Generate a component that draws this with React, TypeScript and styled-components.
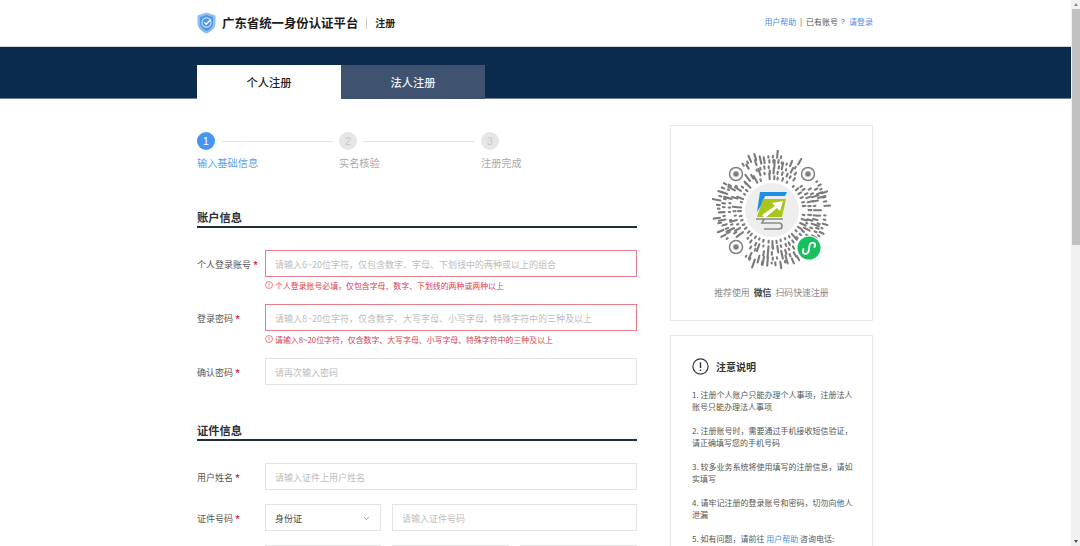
import React from 'react'
import styled, { createGlobalStyle } from 'styled-components'
import { ChevronDown } from 'lucide-react'

const GlobalStyle = createGlobalStyle`
  html, body {
    margin: 0;
    height: 546px;
    overflow: hidden;
    background: #fff;
    font-family: "Noto Sans CJK SC", "Liberation Sans", sans-serif;
  }
  * { box-sizing: border-box; }
`

const Page = styled.div`
  display: flex;
  width: 1080px;
  height: 546px;
  overflow: hidden;
`
const Main = styled.div`
  flex: 1;
  min-width: 0;
  overflow: hidden;
`
const Scrollbar = styled.aside`
  width: 9px;
  display: flex;
  flex-direction: column;
  align-items: center;
  background: #f1f1f1;
`
const ScrollArrow = styled.i<{ $down?: boolean }>`
  display: block;
  width: 0;
  height: 0;
  margin: ${(p) => (p.$down ? 'auto 0 3px' : '3px 0 2px')};
  border-left: 2.5px solid transparent;
  border-right: 2.5px solid transparent;
  border-bottom: ${(p) => (p.$down ? '0' : '3px solid #8a8a8a')};
  border-top: ${(p) => (p.$down ? '3px solid #505050' : '0')};
`
const ScrollThumb = styled.div`
  width: 8px;
  height: 236px;
  margin-top: 1px;
  background: #c1c1c1;
`

const Header = styled.header`
  height: 47px;
  padding: 0 198px 0 197px;
  display: flex;
  align-items: center;
  border-bottom: 1px solid #d4d4d4;
`
const BrandName = styled.div`
  margin: 0 0 1px 6px;
  font-size: 12.4px;
  font-weight: 700;
  color: #1b1b1b;
  white-space: nowrap;
`
const BrandDivider = styled.span`
  width: 1px;
  height: 11px;
  margin: 0 8px;
  background: #cfcfcf;
`
const BrandSub = styled.div`
  margin-bottom: 1px;
  font-size: 10px;
  font-weight: 700;
  color: #222;
`
const HeaderLinks = styled.nav`
  margin: 0 0 3px auto;
  display: flex;
  align-items: center;
  font-size: 8px;
  color: #555;
  white-space: nowrap;
`
const TextLink = styled.a`
  color: #4a90e8;
`
const LinkDivider = styled.span`
  margin: 0 4px 0 3.5px;
  color: #555;
`
const AskMark = styled.span`
  margin: 0 4px 0 2.5px;
  font-family: "Liberation Sans", sans-serif;
`

const Band = styled.div`
  height: 52px;
  padding-left: 197px;
  display: flex;
  align-items: flex-end;
  background: #0a2a4e;
  border-bottom: 1px solid #6f8197;
`
const Tab = styled.div<{ $active?: boolean }>`
  width: 144px;
  height: 34px;
  margin-bottom: -1px;
  display: flex;
  align-items: center;
  justify-content: center;
  font-size: 11.25px;
  font-weight: 500;
  color: ${(p) => (p.$active ? '#222' : '#f0f2f5')};
  background: ${(p) => (p.$active ? '#fff' : '#3f5270')};
`

const Content = styled.div`
  width: 676px;
  margin-left: 197px;
  padding-top: 26px;
  display: flex;
  justify-content: space-between;
`
const FormColumn = styled.div`
  width: 440px;
  padding-top: 7px;
`
const Steps = styled.div`
  display: grid;
  grid-template-columns: 142px 142px 60px;
`
const StepTop = styled.div`
  display: flex;
  align-items: center;
  height: 18px;
`
const StepDot = styled.span<{ $active?: boolean }>`
  flex: none;
  width: 18px;
  height: 18px;
  border-radius: 50%;
  display: flex;
  align-items: center;
  justify-content: center;
  font-family: "Liberation Sans", sans-serif;
  font-size: 10.5px;
  color: ${(p) => (p.$active ? '#fff' : '#c9c9c9')};
  background: ${(p) => (p.$active ? '#4596f2' : '#e6e6e6')};
`
const StepLine = styled.span`
  width: 112px;
  height: 1px;
  margin-left: 6px;
  background: #e2e2e2;
`
const StepLabel = styled.div<{ $active?: boolean }>`
  margin-top: 6px;
  font-size: 10.2px;
  line-height: 14px;
  white-space: nowrap;
  color: ${(p) => (p.$active ? '#5a9ff0' : '#a9a9a9')};
`

const SectionTitle = styled.h2<{ $gap: number }>`
  margin: ${(p) => p.$gap}px 0 22px;
  height: 20px;
  font-size: 11.25px;
  line-height: 18px;
  font-weight: 700;
  color: #2a2f36;
  border-bottom: 2px solid #1f2d3d;
`
const Field = styled.div`
  display: grid;
  grid-template-columns: 68px 1fr;
  margin-bottom: 14px;
`
const FieldLabel = styled.label`
  height: 27px;
  padding-top: 1px;
  display: flex;
  align-items: center;
  font-size: 9px;
  color: #555;
  white-space: nowrap;
`
const Star = styled.span`
  margin-left: 2px;
  font-size: 10px;
  font-weight: 700;
  color: #d8324a;
`
const FieldBody = styled.div`
  min-width: 0;
`
const InputRow = styled.div<{ $cols?: string }>`
  display: grid;
  grid-template-columns: ${(p) => p.$cols || '1fr'};
  gap: 11px;
`
const TextInput = styled.input<{ $invalid?: boolean }>`
  display: block;
  width: 100%;
  height: 27px;
  padding: 1px 9px 0;
  font-family: inherit;
  font-size: 9px;
  color: #333;
  background: #fff;
  border: 1px solid ${(p) => (p.$invalid ? '#e97e8b' : '#e3e3e3')};
  border-radius: 0;
  outline: none;
  &::placeholder {
    color: #bdbdbd;
    opacity: 1;
  }
`
const SelectBox = styled.div<{ $muted?: boolean }>`
  height: 27px;
  padding: 1px 9px 0;
  display: flex;
  align-items: center;
  justify-content: space-between;
  font-size: 9px;
  color: #444;
  background: ${(p) => (p.$muted ? '#f5f5f5' : '#fff')};
  border: 1px solid #e3e3e3;
  svg {
    color: #888;
  }
`
const ErrorText = styled.div`
  height: 14px;
  margin: 1px 0 -2px;
  display: flex;
  align-items: center;
  gap: 2px;
  font-size: 7.9px;
  color: #d8404f;
  white-space: nowrap;
`
const ErrorIcon = styled.svg`
  flex: none;
  width: 8px;
  height: 8px;
`

const SideColumn = styled.aside`
  width: 203px;
  display: flex;
  flex-direction: column;
  gap: 14px;
`
const QrCard = styled.div`
  height: 196px;
  padding-top: 24px;
  display: flex;
  flex-direction: column;
  align-items: center;
  border: 1px solid #e8e8e8;
`
const QrHint = styled.div`
  margin-top: 16px;
  font-size: 8.9px;
  line-height: 14px;
  color: #8a8a8a;
  white-space: nowrap;
  b {
    margin: 0 2px;
    font-weight: 700;
    color: #444;
  }
`
const NoticeCard = styled.div`
  height: 300px;
  padding: 22px 21px 0;
  border: 1px solid #e8e8e8;
`
const NoticeHead = styled.div`
  height: 16px;
  margin-bottom: 15px;
  display: flex;
  align-items: center;
  gap: 7px;
  font-size: 10px;
  font-weight: 700;
  color: #333;
`
const NoticeItem = styled.p`
  margin: 0 0 12px;
  font-size: 8px;
  line-height: 12px;
  color: #555;
  white-space: nowrap;
`

// the code in the picture is just radial dashes, so they are generated with a fixed seed
const makeDashes = () => {
  let seed = 27
  const rand = () => {
    seed = (seed * 16807) % 2147483647
    return seed / 2147483647
  }
  const eyes = [
    [-36, -36],
    [36, -36],
    [-36, 37],
    [37, 38],
  ]
  const dashes: number[][] = []
  for (const r of [31, 36.5, 42, 47.5, 52.5]) {
    const count = Math.round(r * 1.45)
    for (let i = 0; i < count; i++) {
      if (rand() < 0.18) continue
      const a = ((i + rand() * 0.3) / count) * Math.PI * 2
      const len = rand() < 0.35 ? 4 + rand() * 4.5 : 1 + rand() * 2
      const cos = Math.cos(a)
      const sin = Math.sin(a)
      const mx = cos * (r + len / 2)
      const my = sin * (r + len / 2)
      if (eyes.some(([x, y]) => Math.hypot(mx - x, my - y) < 11.5)) continue
      dashes.push([cos * r, sin * r, cos * (r + len), sin * (r + len)])
    }
  }
  return dashes
}
const dashes = makeDashes()

const ShieldLogo = () => (
  <svg width="19" height="22" viewBox="0 0 19 22">
    <path d="M9.5 0.5 L18.5 3.5 V11 C18.5 16 14.5 19.5 9.5 21.5 C4.5 19.5 0.5 16 0.5 11 V3.5 Z" fill="#8dbdf3" />
    <path d="M9.5 3 L16 5.2 V11 C16 14.8 13 17.3 9.5 19 C6 17.3 3 14.8 3 11 V5.2 Z" fill="#4d96ea" />
    <circle cx="9.5" cy="10.5" r="4.6" fill="none" stroke="#cfe3fa" strokeWidth="1.1" />
    <path d="M7.3 10.4 L9.2 12.3 L13.6 7.8" fill="none" stroke="#fff" strokeWidth="1.3" />
  </svg>
)

const InfoIcon = () => (
  <ErrorIcon viewBox="0 0 16 16">
    <circle cx="8" cy="8" r="7" fill="none" stroke="#d8404f" strokeWidth="1.3" />
    <path d="M8 3.8 V9.2 M8 10.8 V12.4" stroke="#d8404f" strokeWidth="1.4" />
  </ErrorIcon>
)

const Eye = ({ x, y }: { x: number; y: number }) => (
  <g>
    <circle cx={x} cy={y} r="6.5" fill="none" stroke="#808080" strokeWidth="1.5" />
    <circle cx={x} cy={y} r="2.8" fill="#808080" />
  </g>
)

const WxCode = () => (
  <svg width="120" height="120" viewBox="-60 -60 120 120">
    <g stroke="#7b7b7b" strokeWidth="2.1" strokeLinecap="round">
      {dashes.map((d, i) => (
        <line key={i} x1={d[0]} y1={d[1]} x2={d[2]} y2={d[3]} />
      ))}
    </g>
    <Eye x={-36} y={-36} />
    <Eye x={36} y={-36} />
    <Eye x={-36} y={37} />
    <circle cx="0" cy="0" r="27" fill="#eeeeee" />
    <path d="M-12 -18 H15 L13 -14 H-7 L-10 -6 L-15 2 Z" fill="#1d8fe0" />
    <path d="M-9 -11 H14 L10 7 H-15 Z" fill="#a6c61c" />
    <path d="M-10 5 L3 -4 L0 -7 L11 -9 L8 1 L5 -2 L-7 8 Z" fill="#fff" />
    <path d="M-16 9 H11 M-8 9 L-10 13 H7 C11 13 11 19 7 19 H-8" fill="none" stroke="#8a8a8a" strokeWidth="1.7" />
    <circle cx="37" cy="38" r="12.5" fill="#fff" />
    <circle cx="37" cy="38" r="11.5" fill="#17bf5f" />
    <path
      d="M31.5 39 C29 43.5 34.5 46 36.6 41.5 L37.6 35 C39.5 30.5 45 33 42.5 37"
      fill="none"
      stroke="#fff"
      strokeWidth="1.9"
      strokeLinecap="round"
    />
  </svg>
)

const App = () => (
  <Page>
    <GlobalStyle />
    <Main>
      <Header>
        <ShieldLogo />
        <BrandName>广东省统一身份认证平台</BrandName>
        <BrandDivider />
        <BrandSub>注册</BrandSub>
        <HeaderLinks>
          <TextLink>用户帮助</TextLink>
          <LinkDivider>|</LinkDivider>
          已有账号
          <AskMark>?</AskMark>
          <TextLink>请登录</TextLink>
        </HeaderLinks>
      </Header>
      <Band>
        <Tab $active>个人注册</Tab>
        <Tab>法人注册</Tab>
      </Band>
      <Content>
        <FormColumn>
          <Steps>
            <div>
              <StepTop>
                <StepDot $active>1</StepDot>
                <StepLine />
              </StepTop>
              <StepLabel $active>输入基础信息</StepLabel>
            </div>
            <div>
              <StepTop>
                <StepDot>2</StepDot>
                <StepLine />
              </StepTop>
              <StepLabel>实名核验</StepLabel>
            </div>
            <div>
              <StepTop>
                <StepDot>3</StepDot>
              </StepTop>
              <StepLabel>注册完成</StepLabel>
            </div>
          </Steps>

          <SectionTitle $gap={38}>账户信息</SectionTitle>
          <Field>
            <FieldLabel>个人登录账号<Star>*</Star></FieldLabel>
            <FieldBody>
              <TextInput $invalid placeholder="请输入6~20位字符，仅包含数字、字母、下划线中的两种或以上的组合" />
              <ErrorText><InfoIcon />个人登录账号必填，仅包含字母、数字、下划线的两种或两种以上</ErrorText>
            </FieldBody>
          </Field>
          <Field>
            <FieldLabel>登录密码<Star>*</Star></FieldLabel>
            <FieldBody>
              <TextInput $invalid placeholder="请输入8~20位字符，仅含数字、大写字母、小写字母、特殊字符中的三种及以上" />
              <ErrorText><InfoIcon />请输入8~20位字符，仅含数字、大写字母、小写字母、特殊字符中的三种及以上</ErrorText>
            </FieldBody>
          </Field>
          <Field>
            <FieldLabel>确认密码<Star>*</Star></FieldLabel>
            <FieldBody>
              <TextInput placeholder="请再次输入密码" />
            </FieldBody>
          </Field>

          <SectionTitle $gap={36}>证件信息</SectionTitle>
          <Field>
            <FieldLabel>用户姓名<Star>*</Star></FieldLabel>
            <FieldBody>
              <TextInput placeholder="请输入证件上用户姓名" />
            </FieldBody>
          </Field>
          <Field>
            <FieldLabel>证件号码<Star>*</Star></FieldLabel>
            <FieldBody>
              <InputRow $cols="116px 1fr">
                <SelectBox>
                  身份证
                  <ChevronDown size={9} />
                </SelectBox>
                <TextInput placeholder="请输入证件号码" />
              </InputRow>
            </FieldBody>
          </Field>
          <Field>
            <FieldLabel />
            <FieldBody>
              <InputRow $cols="116px 117px 1fr">
                <SelectBox $muted />
                <TextInput />
                <TextInput />
              </InputRow>
            </FieldBody>
          </Field>
        </FormColumn>

        <SideColumn>
          <QrCard>
            <WxCode />
            <QrHint>推荐使用 <b>微信</b> 扫码快速注册</QrHint>
          </QrCard>
          <NoticeCard>
            <NoticeHead>
              <svg width="17" height="17" viewBox="0 0 17 17">
                <circle cx="8.5" cy="8.5" r="7.6" fill="none" stroke="#333" strokeWidth="1.2" />
                <path d="M8.5 4.2 V10 M8.5 11.5 V13" stroke="#333" strokeWidth="1.4" />
              </svg>
              注意说明
            </NoticeHead>
            <NoticeItem>1. 注册个人账户只能办理个人事项，注册法人<br />账号只能办理法人事项</NoticeItem>
            <NoticeItem>2. 注册账号时，需要通过手机接收短信验证，<br />请正确填写您的手机号码</NoticeItem>
            <NoticeItem>3. 较多业务系统将使用填写的注册信息，请如<br />实填写</NoticeItem>
            <NoticeItem>4. 请牢记注册的登录账号和密码，切勿向他人<br />泄漏</NoticeItem>
            <NoticeItem>5. 如有问题，请前往 <TextLink>用户帮助</TextLink> 咨询电话:</NoticeItem>
          </NoticeCard>
        </SideColumn>
      </Content>
    </Main>
    <Scrollbar>
      <ScrollArrow />
      <ScrollThumb />
      <ScrollArrow $down />
    </Scrollbar>
  </Page>
)

export default App
